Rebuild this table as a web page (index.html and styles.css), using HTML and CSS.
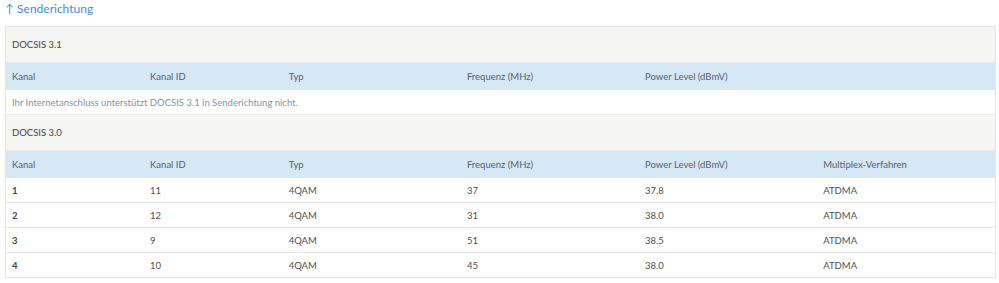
FILE: index.html
```html
<!DOCTYPE html>
<html lang="de">
<head>
<meta charset="utf-8">
<link rel="stylesheet" href="styles.css">
</head>
<body>
<h2 class="title">↑ Senderichtung</h2>
<table class="ds">
  <colgroup>
    <col class="c14"><col class="c14"><col class="c18"><col class="c18"><col class="c18"><col class="c18">
  </colgroup>
  <tbody>
    <tr class="sec"><td colspan="6">DOCSIS 3.1</td></tr>
    <tr class="head"><th>Kanal</th><th>Kanal ID</th><th>Typ</th><th>Frequenz (MHz)</th><th>Power Level (dBmV)</th><th></th></tr>
    <tr class="msg"><td colspan="6">Ihr Internetanschluss unterstützt DOCSIS 3.1 in Senderichtung nicht.</td></tr>
    <tr class="sec"><td colspan="6">DOCSIS 3.0</td></tr>
    <tr class="head"><th>Kanal</th><th>Kanal ID</th><th>Typ</th><th>Frequenz (MHz)</th><th>Power Level (dBmV)</th><th>Multiplex-Verfahren</th></tr>
    <tr class="row"><td class="b">1</td><td>11</td><td>4QAM</td><td>37</td><td>37.8</td><td>ATDMA</td></tr>
    <tr class="row"><td class="b">2</td><td>12</td><td>4QAM</td><td>31</td><td>38.0</td><td>ATDMA</td></tr>
    <tr class="row"><td class="b">3</td><td>9</td><td>4QAM</td><td>51</td><td>38.5</td><td>ATDMA</td></tr>
    <tr class="row"><td class="b">4</td><td>10</td><td>4QAM</td><td>45</td><td>38.0</td><td>ATDMA</td></tr>
  </tbody>
</table>
</body>
</html>
```
FILE: styles.css
```css
html, body {
  margin: 0;
  padding: 0;
  background: #fff;
}
body {
  padding: 0 3px 0 5px;
  font-family: "Lato", "Liberation Sans", sans-serif;
  font-size: 9.5px;
  color: #555;
}
.title {
  margin: 0;
  height: 26px;
  line-height: 18px;
  font-size: 12px;
  font-weight: 400;
  color: #4a8ad8;
}
.ds {
  width: 991px;
  border-collapse: collapse;
  table-layout: fixed;
  border: 1px solid #e6e6e6;
}
.c14 { width: 14%; }
.c18 { width: 18%; }
.ds td, .ds th {
  padding: 0 6px;
  text-align: left;
  font-weight: 400;
  white-space: nowrap;
}
.sec td {
  height: 35px;
  background: #f5f5f3;
  color: #454545;
  border-bottom: 1px solid #eaeaea;
}
.head th {
  height: 27px;
  background: #d6e7f6;
  color: #56616b;
}
.msg td {
  height: 24px;
  color: #8595a2;
  border-bottom: 1px solid #eaeaea;
}
.row td {
  height: 24px;
  color: #505050;
  border-bottom: 1px solid #e6e6e6;
}
.row td.b {
  font-weight: 700;
  color: #444;
}
```
